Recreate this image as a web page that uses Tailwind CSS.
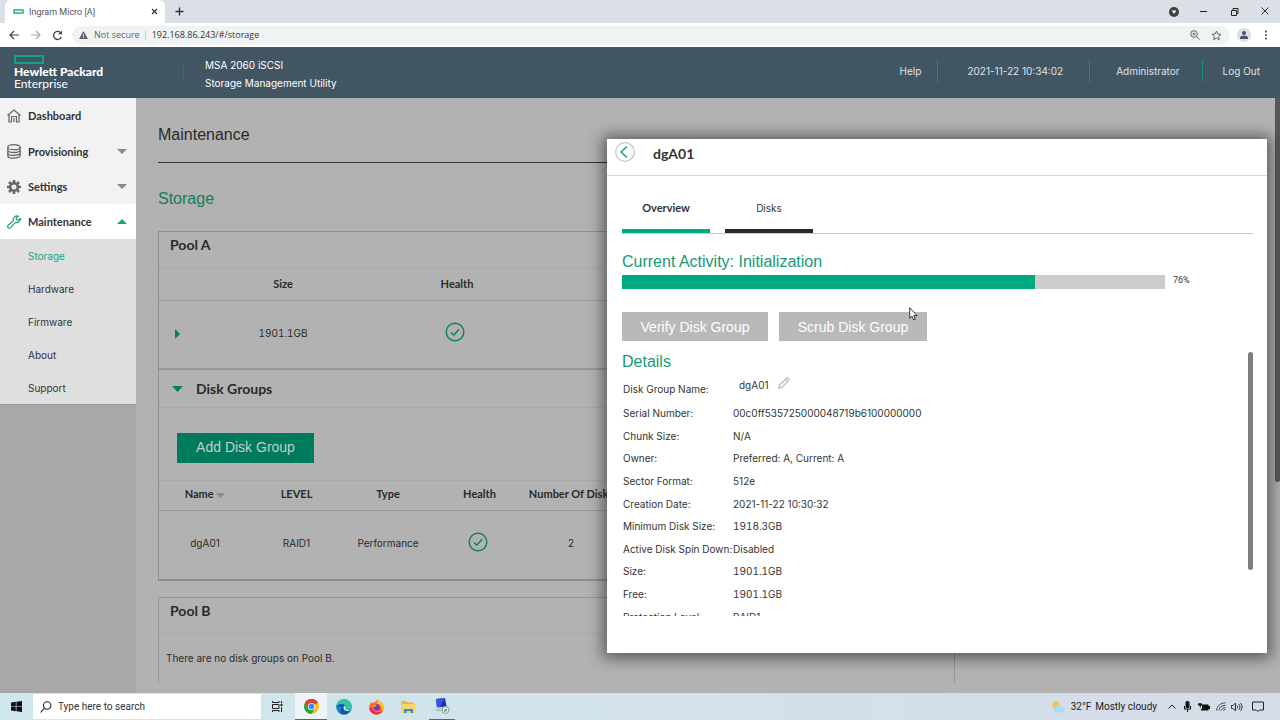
<!DOCTYPE html>
<html lang="en">
<head>
  <meta charset="UTF-8" />
  <meta name="viewport" content="width=device-width, initial-scale=1.0"/>
  <title>Ingram Micro [A]</title>
  <script src="https://cdn.jsdelivr.net/npm/@tailwindcss/browser@4"></script>
</head>
<body class="h-screen flex flex-col overflow-hidden bg-[#b2b2b2] text-[10px] leading-[14px] text-[#333] font-['Inter','Liberation_Sans',sans-serif]">

  <!-- Browser tabs -->
  <div class="flex h-[23px] shrink-0 items-end justify-between bg-[#dbdfe6] pl-[5px] font-['Roboto',sans-serif]">
    <div class="flex h-[23px] items-center">
      <div class="flex h-full w-40 items-center rounded-t-md bg-white pl-2 pr-[7px] text-[9px] text-[#555]">
        <svg class="mr-[5px]" width="11" height="5" viewBox="0 0 11 5"><rect x="1" y="1" width="9" height="3" fill="none" stroke="#2bab88" stroke-width="1.5"/></svg>
        <span>Ingram Micro [A]</span>
        <button class="ml-auto" aria-label="Close tab"><svg width="7" height="7" viewBox="0 0 7 7" stroke="#333" stroke-width="1.2"><path d="M1 1l5 5M6 1l-5 5"/></svg></button>
      </div>
      <button class="ml-[10px]" aria-label="New tab"><svg width="9" height="9" viewBox="0 0 9 9" stroke="#333" stroke-width="1.4"><path d="M4.500 .5v8M.5 4.500h8"/></svg></button>
    </div>
    <div class="flex h-full items-center gap-5 pr-[11px]">
      <svg width="10" height="10" viewBox="0 0 10 10"><circle cx="5" cy="5" r="5" fill="#3c4043"/><path d="M2.500 3.500h5L5 7z" fill="#fff"/></svg>
      <svg width="9" height="10" viewBox="0 0 9 10" stroke="#222"><path d="M1 4.500h7"/></svg>
      <svg class="ml-[2px]" width="9" height="10" viewBox="0 0 9 10" fill="none" stroke="#222"><path d="M1.500 3.500h5v5h-5zM3 3.500v-2h5v5H6.500"/></svg>
      <svg class="ml-[2px]" width="8" height="9" viewBox="0 0 8 9" stroke="#222" stroke-width=".9"><path d="M.5 .5l7 7M7.500 .5l-7 7"/></svg>
    </div>
  </div>

  <!-- Address bar -->
  <div class="flex h-6 shrink-0 items-center bg-white pl-[9px] pr-3 font-['Open_Sans',sans-serif] text-[10px] text-[#5f6368]">
    <button aria-label="Back"><svg width="11" height="10" viewBox="0 0 11 10" fill="none" stroke="#444" stroke-width="1.2"><path d="M10 5H1.500M5 1L1 5l4 4"/></svg></button>
    <button class="ml-[10px]" aria-label="Forward"><svg width="11" height="10" viewBox="0 0 11 10" fill="none" stroke="#aaa" stroke-width="1.2"><path d="M1 5h8.500M6 1l4 4-4 4"/></svg></button>
    <button class="ml-[11px]" aria-label="Reload"><svg width="11" height="11" viewBox="0 0 11 11" fill="none" stroke="#444" stroke-width="1.3"><path d="M9.300 7A4 4 0 1 1 8.500 2.700L9.500 3.800"/><path d="M10 .5v3.800H6.200z" fill="#444" stroke="none"/></svg></button>
    <div class="ml-[9px] flex h-[19px] flex-1 items-center rounded-full bg-[#f0f3f4] pl-[7px] pr-2">
      <svg width="9" height="8" viewBox="0 0 9 8"><path d="M4.500 0L9 8H0z" fill="#5f6368"/><path d="M4.500 3v2.500M4.500 6.200v.8" stroke="#f0f3f4" stroke-width=".9"/></svg>
      <span class="ml-[6px] whitespace-nowrap text-[9px]">Not secure</span>
      <span class="ml-[5px] h-[10px] border-l border-[#c8cbce]"></span>
      <input aria-label="Address" class="ml-[6px] min-w-0 flex-1 bg-transparent text-[9px] text-[#333] outline-none" value="192.168.86.243/#/storage">
      <svg width="10" height="10" viewBox="0 0 10 10" fill="none" stroke="#5f6368"><circle cx="4" cy="4" r="3.300"/><path d="M6.500 6.500L9.500 9.500M2.500 4h3M4 2.500v3"/></svg>
      <svg class="ml-[11px]" width="11" height="11" viewBox="0 0 11 11" fill="none" stroke="#5f6368"><path d="M5.500 1l1.300 3 3.200.3-2.400 2.200.7 3.200-2.800-1.700-2.800 1.700.7-3.200L1 4.300 4.200 4z"/></svg>
    </div>
    <svg class="ml-[7px]" width="14" height="14" viewBox="0 0 14 14"><circle cx="7" cy="7" r="7" fill="#dcdfe5"/><circle cx="7" cy="5" r="2" fill="#4b5468"/><path d="M3 11V9.500C3 8.200 5 7.500 7 7.500s4 .7 4 2V11z" fill="#4b5468"/></svg>
    <svg class="ml-[13px]" width="4" height="10" viewBox="0 0 4 10" fill="#444"><circle cx="2" cy="1.500" r="1"/><circle cx="2" cy="5" r="1"/><circle cx="2" cy="8.500" r="1"/></svg>
  </div>

  <!-- App header -->
  <header class="flex h-[51px] shrink-0 items-center justify-between bg-[#425563] text-white">
    <div class="flex items-center">
      <div class="w-[169px] pl-[14px] font-['Lato',sans-serif] text-xs leading-3">
        <svg class="mb-[2px]" width="30" height="9" viewBox="0 0 30 9"><rect x="1" y="1" width="28" height="7" fill="none" stroke="#12a383" stroke-width="2"/></svg>
        <div class="font-black">Hewlett Packard</div>
        <div>Enterprise</div>
      </div>
      <div class="flex items-center">
        <span class="ml-[14px] h-5 border-l border-[#2c6f6c]"></span>
        <div class="ml-[21px] pt-[2px] leading-[18px]">
          <div>MSA 2060 iSCSI</div>
          <div>Storage Management Utility</div>
        </div>
      </div>
    </div>
    <nav class="mb-1 flex h-[22px] items-center text-[#dfe3e6]">
      <a href="#" class="px-4">Help</a>
      <span class="flex h-full items-center border-l border-[#128f7a] pl-[29px] pr-[26px]">2021-11-22 10:34:02</span>
      <a href="#" class="flex h-full items-center border-l border-[#128f7a] pl-[26px] pr-[22px]">Administrator</a>
      <a href="#" class="flex h-full items-center border-l border-[#128f7a] px-5">Log Out</a>
    </nav>
  </header>

  <div class="relative flex min-h-0 flex-1 overflow-hidden">
    <!-- Side menu -->
    <aside class="w-[136px] shrink-0 bg-[#a8a8a8]">
      <nav class="border-b border-[#999]">
        <div class="bg-[#f2f2f2] font-['Lato',sans-serif] text-[11px] font-bold">
          <a href="#" class="flex h-9 items-center pl-[7px] pr-[9px]">
            <svg width="14" height="14" viewBox="0 0 14 14" fill="none" stroke="#666" stroke-width="1.200"><path d="M.5 6.500L7 1l6.500 5.500M2 5.500V13h2.500V7.500h5V13H12V5.500M7 9v4"/></svg>
            <span class="ml-[7px]">Dashboard</span>
          </a>
          <a href="#" class="flex h-[35px] items-center pl-[7px] pr-[9px]">
            <svg width="14" height="15" viewBox="0 0 14 15" fill="none" stroke="#666" stroke-width="1.300"><ellipse cx="7" cy="3.200" rx="6.200" ry="2.500"/><path d="M.8 3.200v8.500c0 1.400 2.800 2.500 6.200 2.500s6.200-1.100 6.200-2.500V3.200M.8 6c0 1.400 2.800 2.500 6.200 2.500S13.200 7.400 13.200 6M.8 8.900c0 1.400 2.800 2.500 6.200 2.500s6.200-1.100 6.200-2.500"/></svg>
            <span class="ml-[7px]">Provisioning</span>
            <svg class="ml-auto" width="10" height="5" viewBox="0 0 10 5"><path d="M0 0h10L5 5z" fill="#888"/></svg>
          </a>
          <a href="#" class="flex h-[35px] items-center pl-[7px] pr-[9px]">
            <svg width="14" height="14" viewBox="0 0 14 14" fill="none" stroke="#666"><circle cx="7" cy="7" r="3.800" stroke-width="2.600"/><path stroke-width="2.600" d="M7 0v2.500M7 11.500V14M0 7h2.500M11.500 7H14M2 2l1.800 1.800M10.200 10.200L12 12M12 2l-1.800 1.800M3.800 10.200L2 12"/></svg>
            <span class="ml-[7px]">Settings</span>
            <svg class="ml-auto" width="10" height="5" viewBox="0 0 10 5"><path d="M0 0h10L5 5z" fill="#888"/></svg>
          </a>
          <a href="#" class="flex h-[35px] items-center bg-white pl-[7px] pr-[9px]">
            <svg width="14" height="14" viewBox="0 0 14 14" fill="none" stroke="#16a67d" stroke-width="1.200" stroke-linejoin="round"><path d="M11.500 1.200C9 .2 6.300 1.800 6.200 4.300c0 .6.100 1 .1 1.400L1 10.500c-.8.900-.3 2.400 1 2.700.6.100 1.200-.1 1.600-.6l4.700-5c2.700.6 5.300-1.300 5.100-4.200l-2.300 1.700-1.800-.7-.2-1.500z"/></svg>
            <span class="ml-[7px]">Maintenance</span>
            <svg class="ml-auto" width="10" height="5" viewBox="0 0 10 5"><path d="M0 5h10L5 0z" fill="#16a67d"/></svg>
          </a>
        </div>
        <div class="bg-[#dfdfdf]">
          <a href="#" class="flex h-[33px] items-center pl-7 text-[#16a67d]">Storage</a>
          <a href="#" class="flex h-[33px] items-center pl-7">Hardware</a>
          <a href="#" class="flex h-[33px] items-center pl-7">Firmware</a>
          <a href="#" class="flex h-[33px] items-center pl-7">About</a>
          <a href="#" class="flex h-[33px] items-center pl-7">Support</a>
        </div>
      </nav>
    </aside>

    <!-- Storage page, dimmed behind the panel -->
    <main class="min-w-0 flex-1 pl-[22px] pr-[325px] text-[#2a2a2a]">
      <h1 class="-mr-[200px] h-[65px] border-b border-[#333] pt-[27px] font-['Liberation_Sans',sans-serif] text-base leading-5">Maintenance</h1>
      <h2 class="h-[68px] pt-[26px] font-['Liberation_Sans',sans-serif] text-base leading-5 text-[#0f7d5d]">Storage</h2>

      <section class="border border-b-2 border-[#8f8f8f]">
        <h3 class="h-9 border-b border-[#aaa] pl-[11px] pt-[3px] font-['Lato',sans-serif] text-sm leading-5 font-bold">Pool A</h3>
        <table class="w-full table-fixed border-b-2 border-[#999] text-center">
          <thead class="font-['Lato',sans-serif] text-[11px]">
            <tr class="h-8 border-b border-[#999]"><th class="w-[37px]"></th><th class="w-[174px]">Size</th><th class="w-[174px]">Health</th><th></th></tr>
          </thead>
          <tbody>
            <tr class="h-[69px]">
              <td><button class="block pl-4" aria-label="Expand"><svg width="5" height="10" viewBox="0 0 5 10"><path d="M0 0v10l5-5z" fill="#0f7d5d"/></svg></button></td>
              <td class="pb-[2px] tabular-nums">1901.1GB</td>
              <td class="pr-1 pb-[4px]"><svg class="mx-auto" width="20" height="20" viewBox="0 0 20 20" fill="none" stroke="#138061" stroke-width="1.500"><circle cx="10" cy="10" r="8.800"/><path d="M6 10.500l2.800 2.700L14 7.200"/></svg></td>
              <td></td>
            </tr>
          </tbody>
        </table>
        <div class="flex h-[38px] items-center gap-[13px] border-b border-[#aaa] pl-[13px]">
          <svg width="11" height="6" viewBox="0 0 11 6"><path d="M0 0h11L5.500 6z" fill="#0f7d5d"/></svg>
          <h3 class="font-['Lato',sans-serif] text-sm leading-5 font-bold">Disk Groups</h3>
        </div>
        <div class="px-[18px] pt-[25px] pb-[17px]">
          <button class="h-[30px] w-[137px] bg-[#007a5c] pb-[2px] font-['Liberation_Sans',sans-serif] text-sm text-[#c4cfca]">Add Disk Group</button>
        </div>
        <table class="w-full table-fixed text-center">
          <thead class="font-['Lato',sans-serif] text-[11px]">
            <tr class="h-[30px] whitespace-nowrap border-y border-t-[#aaa] border-b-[#999]">
              <th class="w-[92px] pb-[3px]">Name <svg class="inline" width="9" height="5" viewBox="0 0 9 5"><path d="M0 0h9L4.500 5z" fill="#8c8c8c"/></svg></th>
              <th class="w-[91px] pb-[3px]">LEVEL</th><th class="w-[92px] pb-[3px]">Type</th><th class="w-[91px] pb-[3px]">Health</th><th class="w-[92px] pb-[3px]">Number Of Disks</th><th></th>
            </tr>
          </thead>
          <tbody>
            <tr class="h-[68px]">
              <td class="pb-1">dgA01</td><td class="pb-1">RAID1</td><td class="pb-1">Performance</td>
              <td class="pr-1 pb-[6px]"><svg class="mx-auto" width="20" height="20" viewBox="0 0 20 20" fill="none" stroke="#138061" stroke-width="1.500"><circle cx="10" cy="10" r="8.800"/><path d="M6 10.500l2.800 2.700L14 7.200"/></svg></td>
              <td class="pb-1">2</td><td></td>
            </tr>
          </tbody>
        </table>
      </section>

      <section class="mt-4 h-[86px] border border-b-0 border-[#959595]">
        <h3 class="h-9 border-b border-[#aaa] pl-[11px] pt-[3px] font-['Lato',sans-serif] text-sm leading-5 font-bold">Pool B</h3>
        <p class="pl-[7px] pt-[17px]">There are no disk groups on Pool B.</p>
      </section>
    </main>

    <div class="absolute right-0 top-0 h-96 w-[5px] rounded-b-sm bg-[#585858]"></div>

    <!-- Disk group panel -->
    <div class="absolute top-[41px] right-[13px] flex h-[514px] w-[660px] flex-col bg-white shadow-[0_1px_14px_4px_rgba(0,0,0,0.5)]">
      <div class="flex h-[37px] shrink-0 items-start border-b border-[#d8d8d8] pl-2 pt-[3px]">
        <button aria-label="Back to storage"><svg width="20" height="20" viewBox="0 0 20 20" fill="none"><circle cx="10" cy="10" r="9.300" stroke="#c4c8c8" stroke-width="1.300"/><path d="M11.800 4.500L6.200 10l5.600 5.500" stroke="#16a67d" stroke-width="1.600"/></svg></button>
        <h2 class="ml-[18px] mt-[2px] font-['Lato',sans-serif] text-sm leading-5 font-bold">dgA01</h2>
      </div>
      <div class="flex min-h-0 flex-1 flex-col pl-[15px] pr-[14px]">
        <div class="flex h-[58px] shrink-0 items-end gap-[15px] border-b border-[#ccc]">
          <button class="h-8 w-[88px] border-b-4 border-[#01a982] pb-[14px] font-bold font-['Lato',sans-serif] text-[11px]">Overview</button>
          <button class="h-8 w-[88px] border-b-4 border-[#2d2a2f] pb-[14px]">Disks</button>
        </div>
        <h3 class="mt-[18px] font-['Liberation_Sans',sans-serif] text-base leading-5 text-[#169a75]">Current Activity: Initialization</h3>
        <div class="mt-[3px] flex items-start gap-2">
          <div class="h-[14px] w-[543px] bg-[#ccc]"><div class="h-full bg-[#01a982]" style="width: 76%"></div></div>
          <span class="font-['Roboto',sans-serif] text-[9px] leading-[10px]">76%</span>
        </div>
        <div class="mt-[23px] flex gap-[11px] font-['Liberation_Sans',sans-serif] text-sm text-white">
          <button class="h-[29px] w-[146px] bg-[#b9b9b9]">Verify Disk Group</button>
          <button class="h-[29px] w-[148px] bg-[#b9b9b9]">Scrub Disk Group</button>
        </div>
        <div class="mt-[11px] flex h-[264px] items-start justify-between">
          <div class="h-full overflow-hidden">
            <h3 class="font-['Liberation_Sans',sans-serif] text-base leading-5 text-[#169a75]">Details</h3>
            <dl class="grid h-[30px] grid-cols-[110px_auto] pl-px">
              <dt class="pt-[10px] whitespace-nowrap">Disk Group Name:</dt>
              <dd class="flex items-start gap-[9px] pl-[6px] pt-[5px]"><span class="pt-[1px]">dgA01</span>
                <button aria-label="Edit name"><svg width="12" height="12" viewBox="0 0 12 12" fill="none" stroke="#bbb" stroke-width="1.300" stroke-linejoin="round"><path d="M.8 11.200L1.600 8 8.500 1.200c1.300-1 3.200.8 2.300 2.200L4 10.300zM7.500 2.500l2 2"/></svg></button>
              </dd>
            </dl>
            <dl class="grid h-[226px] auto-rows-fr grid-cols-[110px_auto] items-center pl-px whitespace-nowrap">
              <dt>Serial Number:</dt><dd>00c0ff535725000048719b6100000000</dd>
              <dt>Chunk Size:</dt><dd>N/A</dd>
              <dt>Owner:</dt><dd>Preferred: A, Current: A</dd>
              <dt>Sector Format:</dt><dd>512e</dd>
              <dt>Creation Date:</dt><dd>2021-11-22 10:30:32</dd>
              <dt>Minimum Disk Size:</dt><dd class="tabular-nums">1918.3GB</dd>
              <dt>Active Disk Spin Down:</dt><dd>Disabled</dd>
              <dt>Size:</dt><dd class="tabular-nums">1901.1GB</dd>
              <dt>Free:</dt><dd class="tabular-nums">1901.1GB</dd>
              <dt>Protection Level:</dt><dd>RAID1</dd>
            </dl>
          </div>
          <div class="h-[218px] w-[5px] rounded-full bg-[#7f7f7f]"></div>
        </div>
      </div>
    </div>

    <!-- Mouse pointer -->
    <svg class="absolute left-[909px] top-[209px]" width="9" height="14" viewBox="0 0 9 14"><path d="M.7 .8v10.400l2.300-2 1.600 3.700 1.700-.7-1.500-3.600h3.300z" fill="#fff" stroke="#222" stroke-width=".9"/></svg>
  </div>

  <!-- Taskbar -->
  <footer class="flex h-[27px] shrink-0 items-center bg-linear-to-r from-[#cfe7ed] to-[#d5dce8] font-['Roboto',sans-serif] text-[10px] text-[#222]">
    <button class="w-8 pl-[11px]" aria-label="Start"><svg width="11" height="11" viewBox="0 0 11 11" fill="#111"><path d="M0 1.500L4.800.8v4.400H0zM5.400.7L11 0v5.200H5.400zM0 5.800h4.800v4.400L0 9.500zM5.400 5.800H11V11l-5.600-.7z"/></svg></button>
    <label class="ml-px flex h-[25px] w-[228px] items-center bg-white pl-[7px]">
      <svg width="12" height="12" viewBox="0 0 12 12" fill="none" stroke="#222" stroke-width="1.100"><circle cx="7.200" cy="4.500" r="3.700"/><path d="M4.500 7.200L.5 11.500"/></svg>
      <input class="ml-[6px] min-w-0 flex-1 outline-none placeholder:text-[#333]" placeholder="Type here to search" aria-label="Search">
    </label>
    <button class="w-[34px] pl-[11px]" aria-label="Task view"><svg width="11" height="11" viewBox="0 0 11 11" fill="none" stroke="#222"><path d="M.5 0v1.500h6.500V0M.5 11V9.500h6.500V11M.5 3.500h6.500v4H.5zM9.500 0v2.500M9.500 6v5"/><path d="M8.500 4h2" stroke-width="2"/></svg></button>
    <button class="flex h-full w-8 items-center justify-center border-b border-[#1a76c4] bg-[#eef4f8]" aria-label="Chrome"><svg width="15" height="15" viewBox="0 0 16 16"><circle cx="8" cy="8" r="8" fill="#fbc116"/><path d="M8 8L1.100 4A8 8 0 0 1 14.900 4z" fill="#e0402f"/><path d="M8 8L1.100 4A8 8 0 0 0 8 16l3.500-6z" fill="#2ba24c"/><path d="M8 4.300h7A8 8 0 0 0 1.100 4l3.700 6z" fill="#e0402f"/><circle cx="8" cy="8" r="3.800" fill="#fff"/><circle cx="8" cy="8" r="3" fill="#4285f4"/></svg></button>
    <button class="flex w-[33px] justify-center" aria-label="Edge"><svg width="16" height="16" viewBox="0 0 16 16"><circle cx="8" cy="8" r="7.800" fill="#1683d0"/><path d="M.3 7.500C.8 3 4 .2 8 .2c4.500 0 7.800 3.200 7.800 6.800 0 2.400-1.800 4-4 4-1.800 0-2.800-.6-2.500-1.300 1.200-1.800.2-4.200-2.500-4.200C3.800 5.500 1 6.500.3 7.500z" fill="#38c2a5"/><path d="M.3 7.500C2 4.500 9.500 3.500 9.500 8.500c0 .5-.1.900-.4 1.300C9.200 11.500 12 12 15 10.600 13 15 8.500 16.500 5 14.500 3.500 12 4.500 8.500 7 7.500" fill="#0c59a4"/><path d="M9.300 9.700c.8-.9.300-2.400-.7-3-1.500 1.200-2 5 2.900 5.300 1.500 0 2.500-.5 3.500-1.400-2 1-5.500.5-5.700-.9z" fill="#d8edf1"/></svg></button>
    <button class="flex w-8 justify-center" aria-label="Firefox"><svg width="15" height="16" viewBox="0 0 15 16"><path d="M7.500 15.500C3.400 15.500.3 12.500.3 8.500c0-2.500 1-4.500 2-5.700l.5 2C4 3.200 5 3.500 6 3.300 7 2 8 1 9.200.5c0 1.500 1 2 2.500 3.200L12 2.800c2 1.700 2.800 3.700 2.800 5.700 0 4-3.200 7-7.300 7z" fill="#ff6b2c"/><path d="M9.200.5c0 1.500 1 2 2.500 3.200L12 2.800c2 1.700 2.800 3.700 2.800 5.700 0 1.500-.6 3-1.500 4C14 8.500 11 6 8 4.500 8 3 8.400 1.300 9.200.5z" fill="#ffc928"/><path d="M.3 8.500c0 4 3.100 7 7.200 7 3 0 5.300-1.500 6.300-3.700C11 14 5 14.500 2.500 9z" fill="#e8274f"/><circle cx="7.800" cy="8.500" r="3.200" fill="#8035c5"/><path d="M3 6.500c2-1.500 3.500-.5 4.800-.2-.5 1.200-2 1-2.500 2.200z" fill="#ff9a2b"/></svg></button>
    <button class="flex w-8 justify-center" aria-label="File Explorer"><svg width="15" height="14" viewBox="0 0 15 14"><path d="M.5 1h4.500l1.500 1.500H13V12H.5z" fill="#e9b53c"/><path d="M.5 4h14v9H.5z" fill="#fbd66b"/><path d="M3 13V9h9v4h-2.500v-2h-4v2z" fill="#2b8fd4"/></svg></button>
    <button class="ml-[5px] flex h-full w-[26px] items-center justify-center border-b border-[#1a76c4]" aria-label="Remote Desktop"><svg width="16" height="16" viewBox="0 0 16 16"><path d="M2 1l9-1 1.500 8.500L3 9.500z" fill="#1c2cba"/><path d="M2 1l9-1L6 9H3z" fill="#3c55dc"/><path d="M1 11l8-1 2 2-8 1.500z" fill="#b8c0c8"/><circle cx="11.500" cy="12" r="3.500" fill="#e5ecea" stroke="#8a9a92"/><path d="M10 12.500l3-1.500M10.500 13.500l2.500-1" stroke="#4a8a5a"/></svg></button>
    <div class="ml-auto flex items-center pr-4">
      <svg width="15" height="12" viewBox="0 0 15 12"><circle cx="5" cy="4" r="3.500" fill="#f8c24a"/><path d="M4 11.500a3 3 0 0 1 .2-5.500 3.800 3.800 0 0 1 7 .8 2.400 2.400 0 0 1 .6 4.700z" fill="#a8dcf3"/></svg>
      <span class="ml-[5px] whitespace-nowrap">32°F</span>
      <span class="ml-1 whitespace-nowrap">Mostly cloudy</span>
      <svg class="ml-[11px]" width="8" height="5" viewBox="0 0 8 5" fill="none" stroke="#222"><path d="M.5 4.500L4 1l3.500 3.500"/></svg>
      <svg class="ml-2" width="7" height="11" viewBox="0 0 7 11" fill="#111"><rect x="1.500" width="4" height="7" rx="1.500"/><path d="M0 5h1v2.500h5V5h1v3.500H4V11H3V8.500H0z"/></svg>
      <svg class="ml-[7px]" width="12" height="8" viewBox="0 0 12 8" fill="#111"><path d="M4 1.500h6.500v1.500H12v3h-1.500V7.500H3V6h1zM0 .5h1V0h.7v.5h.8V0h.7v.5H4v2H2.800v2h-1v-2H0z"/></svg>
      <svg class="ml-[6px]" width="10" height="9" viewBox="0 0 10 9" fill="none" stroke="#333" stroke-width=".9"><path d="M.5 8.500C1 4 4.500 1 9.500.8M2.800 8.500c.4-3 2.700-5 6.700-5.200M5 8.500c.3-1.600 1.700-2.700 4.500-2.800M7.200 8.500c.2-.6 1-.9 2.300-1"/></svg>
      <svg class="ml-[5px]" width="12" height="10" viewBox="0 0 12 10" fill="none" stroke="#222" stroke-width=".9"><path d="M.5 3.500h1.700L4.500 1v8L2.200 6.500H.5zM6 3.500c.7.800.7 2.200 0 3M7.800 2c1.500 1.700 1.500 4.300 0 6M9.500 1c2 2.300 2 5.700 0 8"/></svg>
      <svg class="ml-[9px]" width="12" height="12" viewBox="0 0 12 12" fill="none" stroke="#222"><path d="M.5 1h11v8H7.500L6 10.500 4.500 9h-4z"/></svg>
    </div>
  </footer>
</body>
</html>
